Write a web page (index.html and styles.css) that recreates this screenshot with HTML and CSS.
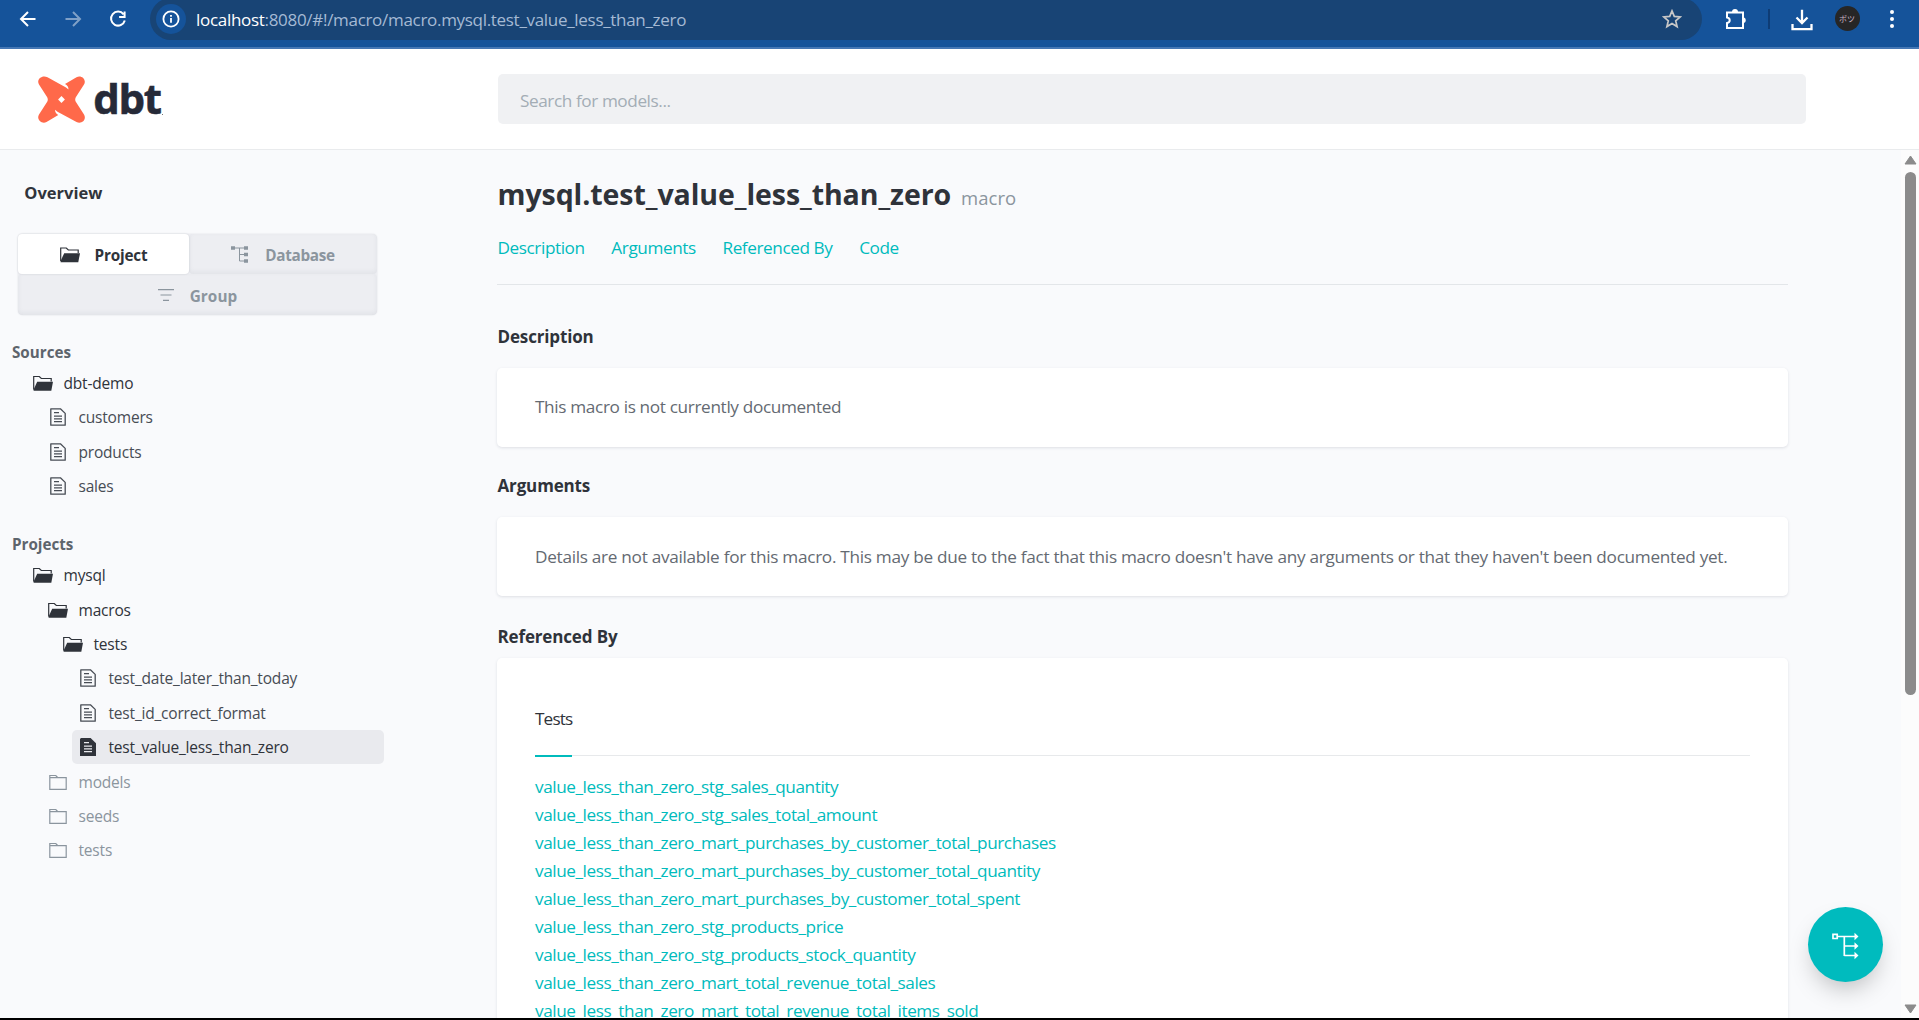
FILE: index.html
```html
<!DOCTYPE html>
<html lang="en">
<head>
<meta charset="utf-8">
<title>dbt Docs</title>
<link rel="stylesheet" href="styles.css">
</head>
<body>
<svg class="defs" aria-hidden="true">
  <symbol id="folder-open" viewBox="0 0 20 16"><path d="M.7 14V1h5.6l2 2h9.9v3" fill="none" stroke="currentColor" stroke-width="1.2"/><path d="M4.2 6.2H20l-1.7 9.1H.6V14z" fill="currentColor"/></symbol>
  <symbol id="folder" viewBox="0 0 20 17"><path d="M1.8 15.3V3.600h16.4v11.7zM1.8 4V1.500h6l1.8 2" fill="none" stroke="currentColor" stroke-width="1.2"/></symbol>
  <symbol id="file" viewBox="0 0 16 18"><path d="M.8.8h9.6l4.8 4.6v11.8H.8z" fill="none" stroke="currentColor" stroke-width="1.3" stroke-linejoin="round"/><path d="M4 4.6h5M4 8.2h8M4 10.9h8M4 13.6h8" stroke="currentColor" stroke-width="1.2"/></symbol>
  <symbol id="file-solid" viewBox="0 0 16 18"><path d="M1 0h9.6L16 5.2V18H0V1z" fill="currentColor"/><path d="M4 4.6h5M4 8.2h8M4 10.9h8M4 13.6h8" stroke="#e9eaee" stroke-width="1.2"/></symbol>
</svg>

<header class="browser">
  <svg class="nav-icon" viewBox="0 0 24 24"><path d="M19.5 12H5.5M12 5l-7 7 7 7"/></svg>
  <svg class="nav-icon dim" viewBox="0 0 24 24"><path d="M4.500 12h14M12 5l7 7-7 7"/></svg>
  <svg class="nav-icon reload" viewBox="0 0 24 24"><path d="M17.600 7.300A7 7 0 1 0 18.800 13.500M18.600 4.500v5.500h-5.500"/></svg>
  <div class="address">
    <span class="site-info"><svg viewBox="0 0 18 18"><circle cx="9" cy="9" r="7.600"/><path d="M9 8v4.800M9 5v1.700"/></svg></span>
    <span class="url"><b>localhost</b>:8080/#!/macro/macro.mysql.test_value_less_than_zero</span>
    <svg class="star" viewBox="0 0 20 20"><path d="M10 1.900l2.300 5.500 5.900.5-4.500 3.900 1.400 5.800-5.100-3.100-5.100 3.100 1.400-5.800-4.500-3.900 5.900-.5z"/></svg>
  </div>
  <svg class="puzzle" viewBox="0 0 22 22"><path d="M2 4.500h16v15.500H2v-5q2.700-.4 2.700-2.750T2 9.500z"/><path class="solid" d="M7 4a3 3 0 0 1 6 0zM19 9.500a3 3 0 0 1 0 5.500z"/></svg>
  <span class="divider"></span>
  <svg class="download" viewBox="0 0 22 22"><path d="M11 .8v12.700M5.500 8.500l5.500 5.500 5.500-5.500M1.500 15v5.200h19V15"/></svg>
  <span class="avatar">ボツ</span>
  <svg class="dots" viewBox="0 0 4 20"><circle cx="2" cy="3" r="2"/><circle cx="2" cy="10" r="2"/><circle cx="2" cy="17" r="2"/></svg>
</header>

<div class="topbar">
  <div class="logo">
    <svg viewBox="0 0 47 47"><path fill="#ff694a" d="M9.500 1.300L28 11.500L30.500 13.400Q30.500 10 27 8L38.500 1.200C43-1.500 49 3.200 46 8.500L37.800 21.200Q36.600 23.500 37.800 25.800L46 38.500C49 43.800 43.500 48.500 38.500 46L19.500 35.800L17 33.800Q17 37 20.300 39L8.500 46C4 48.500-2 43.800 1 38.500L9.200 25.800Q10.400 23.500 9.200 21.200L1 8.500C-2 3.500 4-1.500 9.500 1.300z"/><path fill="#fff" d="M23.500 20.100l3.400 3.400-3.400 3.400-3.400-3.400z"/></svg>
    <span class="word">dbt</span><i></i>
  </div>
  <div class="search">Search for models...</div>
</div>

<div class="page">
  <nav class="sidebar">
    <div class="overview">Overview</div>
    <div class="switch">
      <div class="tab on"><svg width="20" height="16"><use href="#folder-open"/></svg><span>Project</span></div>
      <div class="tab db"><svg width="17" height="17" viewBox="0 0 17 17"><path d="M2 2h12M8.500 2v13H14M8.500 8.500H14" fill="none" stroke="currentColor"/><path fill="currentColor" d="M0 .3h4v3.500H0zM13 .3h4v3.500h-4zM13 6.800h4v3.500h-4zM13 13.200h4v3.500h-4z"/></svg><span>Database</span></div>
      <div class="tab group"><svg width="16" height="12" viewBox="0 0 16 12"><path d="M0 .7h16M2.500 6h11M5 11.300h6" stroke="currentColor" stroke-width="1.200"/></svg><span>Group</span></div>
    </div>
    <div class="heading">Sources</div>
    <ul class="tree">
      <li class="dark"><svg><use href="#folder-open"/></svg>dbt-demo</li>
      <li class="d1 file"><svg><use href="#file"/></svg>customers</li>
      <li class="d1 file"><svg><use href="#file"/></svg>products</li>
      <li class="d1 file"><svg><use href="#file"/></svg>sales</li>
    </ul>
    <div class="heading">Projects</div>
    <ul class="tree">
      <li class="dark"><svg><use href="#folder-open"/></svg>mysql</li>
      <li class="dark d1"><svg><use href="#folder-open"/></svg>macros</li>
      <li class="dark d2"><svg><use href="#folder-open"/></svg>tests</li>
      <li class="d3 file"><svg><use href="#file"/></svg>test_date_later_than_today</li>
      <li class="d3 file"><svg><use href="#file"/></svg>test_id_correct_format</li>
      <li class="dark d3 file selected"><svg><use href="#file-solid"/></svg>test_value_less_than_zero</li>
      <li class="muted d1"><svg><use href="#folder"/></svg>models</li>
      <li class="muted d1"><svg><use href="#folder"/></svg>seeds</li>
      <li class="muted d1"><svg><use href="#folder"/></svg>tests</li>
    </ul>
  </nav>

  <main class="content">
    <h1>mysql.test_value_less_than_zero<small>macro</small></h1>
    <div class="anchors"><a>Description</a><a>Arguments</a><a>Referenced By</a><a>Code</a></div>
    <h2>Description</h2>
    <div class="card text">This macro is not currently documented</div>
    <h2>Arguments</h2>
    <div class="card text details">Details are not available for this macro. This may be due to the fact that this macro doesn't have any arguments or that they haven't been documented yet.</div>
    <h2 class="tight">Referenced By</h2>
    <div class="card refs">
      <div class="ref-tabs"><span>Tests</span></div>
      <ul>
        <li>value_less_than_zero_stg_sales_quantity</li>
        <li>value_less_than_zero_stg_sales_total_amount</li>
        <li>value_less_than_zero_mart_purchases_by_customer_total_purchases</li>
        <li>value_less_than_zero_mart_purchases_by_customer_total_quantity</li>
        <li>value_less_than_zero_mart_purchases_by_customer_total_spent</li>
        <li>value_less_than_zero_stg_products_price</li>
        <li>value_less_than_zero_stg_products_stock_quantity</li>
        <li>value_less_than_zero_mart_total_revenue_total_sales</li>
        <li>value_less_than_zero_mart_total_revenue_total_items_sold</li>
      </ul>
    </div>
  </main>

  <div class="scrollbar">
    <svg width="13" height="10" viewBox="0 0 13 10"><path d="M6.500 1L12 9H1z"/></svg>
    <div class="thumb"></div>
    <svg class="down" width="13" height="10" viewBox="0 0 13 10"><path d="M6.500 9L12 1H1z"/></svg>
  </div>
</div>

<div class="fab"><svg width="28" height="28" viewBox="0 0 28 28"><path d="M6 4.500h18M13.300 4.500v19.500M13.300 14H24M13.300 23.500H24M2 2.300h4.200v4.200H2z" fill="none" stroke="#fff" stroke-width="1.700"/><path fill="#fff" d="M23.500.7l4 3.800-4 3.800zM23.500 10.200l4 3.800-4 3.800zM23.500 19.700l4 3.800-4 3.800z"/></svg></div>
</body>
</html>
```
FILE: styles.css
```css
* { box-sizing: border-box; }

body {
  margin: 0;
  height: 1020px;
  overflow: hidden;
  display: flex;
  flex-direction: column;
  border-bottom: 2px solid #000;
  background: #f9fafc;
  font-family: "Open Sans", "Noto Sans", sans-serif;
  white-space: nowrap;
}

.defs { position: absolute; width: 0; height: 0; }
ul { list-style: none; margin: 0; padding: 0; }
svg { flex: none; }

/* Browser toolbar */
.browser {
  flex: none;
  display: flex;
  align-items: flex-start;
  height: 49px;
  background: #15539a;
  border-bottom: 2px solid #4577b4;
}
.browser svg { fill: none; stroke: #fff; stroke-width: 2; }
.nav-icon { width: 24px; height: 24px; margin: 6.500px 0 0 15.500px; }
.nav-icon.dim { margin-left: 21px; opacity: .45; }
.nav-icon.reload { margin-left: 21px; }
.address {
  display: flex;
  align-items: center;
  width: 1552px;
  height: 42px;
  margin: -2px 0 0 20px;
  padding: 0 20px 0 6px;
  border-radius: 21px;
  background: #184475;
}
.site-info {
  display: flex;
  align-items: center;
  justify-content: center;
  width: 30px;
  height: 30px;
  border-radius: 50%;
  background: #15539a;
}
.site-info svg { width: 18px; height: 18px; stroke-width: 1.800; }
.url {
  flex: 1;
  margin-left: 10.500px;
  padding-top: 1px;
  font-size: 17px;
  letter-spacing: -.303px;
  color: #a5bad4;
}
.url b { font-weight: 400; color: #fff; }
.browser .star { width: 20px; height: 20px; stroke: #c7c7c7; stroke-width: 1.700; }
.puzzle { width: 22px; height: 22px; margin: 7.500px 0 0 23.500px; }
.browser .solid { fill: #fff; stroke: none; }
.divider { width: 2px; height: 20px; margin: 9px 0 0 20.500px; background: #0e3c75; }
.download { width: 22px; height: 22px; margin: 8.500px 0 0 21px; }
.browser .download { stroke-width: 2.300; }
.avatar {
  width: 25px;
  height: 25px;
  margin: 6px 0 0 22px;
  border-radius: 50%;
  background: #262626;
  color: #c9b3c4;
  font: 8px/25px "Noto Sans CJK JP", sans-serif;
  text-align: center;
}
.dots { width: 4px; height: 20px; margin: 8.500px 0 0 30px; }
.browser .dots { fill: #fff; stroke: none; }

/* Docs header */
.topbar {
  flex: none;
  display: flex;
  align-items: flex-start;
  height: 101px;
  border-bottom: 1px solid #e9ebed;
  background: #fff;
}
.logo { display: flex; width: 498px; padding: 26.500px 0 0 37.800px; }
.logo svg { width: 47px; height: 47px; }
.word {
  margin: -1px 0 0 8.500px;
  color: #262a38;
  font-size: 42px;
  font-weight: 700;
  line-height: 46px;
  letter-spacing: -1.400px;
  -webkit-text-stroke: .600px #262a38;
}
.logo i { width: 1px; height: 1px; margin: 38px 0 0 1px; background: #777; }
.search {
  width: 1308px;
  height: 50px;
  margin-top: 25px;
  padding: 1.500px 22px 0;
  border-radius: 5px;
  background: #f0f1f3;
  color: #a3adb5;
  font-size: 17.200px;
  line-height: 50px;
  letter-spacing: -.420px;
}

.page { flex: 1; min-height: 0; display: flex; overflow: hidden; }

/* Sidebar */
.sidebar { flex: none; width: 497px; padding-top: 31.300px; }
.overview { margin-left: 24.300px; font-size: 16.500px; font-weight: 700; line-height: 24px; color: #30343b; }
.switch {
  display: grid;
  grid-template-columns: 171px 188px;
  grid-template-rows: 40px 41px;
  width: 359px;
  margin: 28.700px 0 27.300px 18px;
  border-radius: 5px;
  background: #edeef2;
  box-shadow: 0 0 2px rgba(40, 50, 70, .14);
}
.tab {
  display: flex;
  align-items: center;
  justify-content: center;
  gap: 15px;
  border-radius: 4px;
  box-shadow: inset 0 -2px 5px rgba(40, 50, 70, .06);
  color: #8b959e;
  font-size: 15.300px;
  font-weight: 700;
  letter-spacing: -.200px;
}
.tab.on { background: #fff; color: #2f333a; box-shadow: 0 0 2px rgba(40, 50, 70, .16); }
.tab.db { gap: 17px; letter-spacing: -.300px; }
.tab.group { grid-column: 1 / 3; gap: 16px; letter-spacing: .100px; }
.tab span { padding-top: 3px; }
.tab svg { margin-top: 2px; }
.heading {
  margin-left: 12px;
  color: #5d646c;
  font-size: 15.200px;
  font-weight: 700;
  line-height: 20px;
}
.tree { padding: 3.600px 0 31px; }
.tree li {
  display: flex;
  align-items: center;
  height: 34.400px;
  margin: 0 113px 0 27px;
  padding-left: 6px;
  border-radius: 5px;
  color: #474c54;
  font-size: 15.500px;
  letter-spacing: -.190px;
}
.tree svg { width: 20px; height: 17px; margin: 1px 10.500px 0 0; }
.tree .d1 { margin-left: 42px; }
.tree .d2 { margin-left: 57px; }
.tree .d3 { margin-left: 72px; }
.tree .file { padding-left: 8px; }
.tree .file svg { width: 16px; height: 18px; margin: 0 12.500px 0 0; }
.tree .dark { color: #2f333a; }
.tree .muted { color: #8b959e; }
.tree .selected { background: #e9eaee; }

/* Main column */
.content { flex: none; width: 1404px; padding: 24px 113px 0 0; color: #2f333a; }
h1 { margin: 0; font-size: 28.500px; line-height: 40px; font-weight: 700; letter-spacing: -.070px; }
small { margin-left: 10px; font-size: 18.500px; line-height: 20px; font-weight: 400; letter-spacing: 0; color: #8b959e; }
.anchors {
  display: flex;
  gap: 26.700px;
  margin: 20px 0 39.500px;
  padding-bottom: 22px;
  border-bottom: 1px solid #e3e6e9;
  color: #00bbbc;
  font-size: 17.200px;
  line-height: 28px;
  letter-spacing: -.420px;
}
h2 { margin: 0 0 19px; font-size: 17px; line-height: 24px; font-weight: 700; letter-spacing: -.150px; }
h1, h2, .anchors a:first-child { padding-left: .500px; }
h2.tight { margin-bottom: 8.500px; }
.card {
  margin-bottom: 27.500px;
  border-radius: 5px;
  background: #fff;
  box-shadow: 0 1px 3px rgba(40, 50, 70, .13);
  font-size: 17.200px;
  line-height: 28px;
}
.card.text { height: 79px; padding: 25.500px 38px; color: #646a72; letter-spacing: -.350px; }
.card.details { margin-bottom: 29px; letter-spacing: -.290px; }
.refs { height: 600px; padding: 47.500px 38px 0; }
.ref-tabs { display: flex; height: 51px; border-bottom: 1px solid #e7e9eb; letter-spacing: -.850px; }
.ref-tabs span { height: 51.500px; border-bottom: 2px solid #00bbbc; }
.refs ul { padding-top: 17px; color: #00bbbc; letter-spacing: -.430px; }

/* Scrollbar */
.scrollbar {
  flex: none;
  display: flex;
  flex-direction: column;
  align-items: center;
  width: 18px;
  padding: 5px 0 4px 1px;
  background: #fcfcfc;
}
.scrollbar svg { fill: #8b8b8b; stroke: #8b8b8b; stroke-linejoin: round; }
.thumb { width: 11px; height: 523px; margin-top: 7px; border-radius: 6px; background: #8b8b8b; }
.down { margin-top: auto; }

/* Lineage graph button, floating over the page */
.fab {
  position: absolute;
  right: 36px;
  bottom: 38px;
  display: flex;
  align-items: center;
  justify-content: center;
  width: 75px;
  height: 75px;
  border-radius: 50%;
  background: #00bbbe;
  box-shadow: 0 12px 24px -6px rgba(0, 0, 0, .25);
}
.fab svg { margin: 2px 2px 0 0; }
```
